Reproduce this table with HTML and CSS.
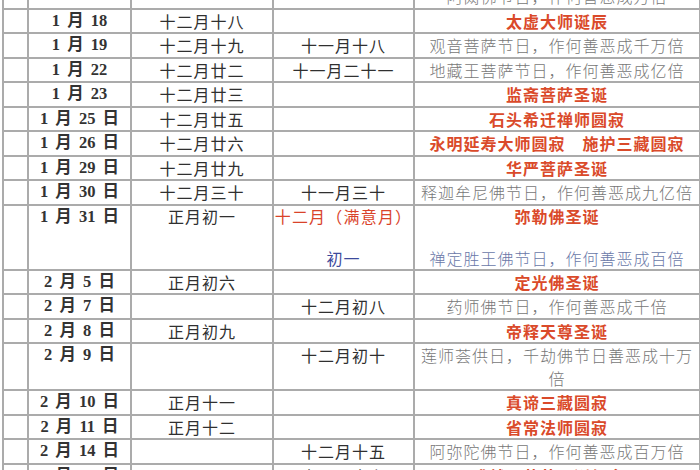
FILE: index.html
```html
<!DOCTYPE html>
<html lang="zh-CN">
<head>
<meta charset="utf-8">
<title>佛教节日表</title>
<link rel="stylesheet" href="styles.css">
</head>
<body>
<table class="cal">
<colgroup><col class="c1"><col class="c2"><col class="c3"><col class="c4"><col class="c5"></colgroup>
<tr><td></td><td></td><td></td><td></td><td class="g">阿閦佛节日，作何善恶成万倍</td></tr>
<tr><td></td><td class="d">1 月 18</td><td class="l">十二月十八</td><td></td><td class="r">太虚大师诞辰</td></tr>
<tr><td></td><td class="d">1 月 19</td><td class="l">十二月十九</td><td class="l">十一月十八</td><td class="g">观音菩萨节日，作何善恶成千万倍</td></tr>
<tr><td></td><td class="d">1 月 22</td><td class="l">十二月廿二</td><td class="l">十一月二十一</td><td class="g">地藏王菩萨节日，作何善恶成亿倍</td></tr>
<tr><td></td><td class="d">1 月 23</td><td class="l">十二月廿三</td><td></td><td class="r">监斋菩萨圣诞</td></tr>
<tr><td></td><td class="d">1 月 25 日</td><td class="l">十二月廿五</td><td></td><td class="r">石头希迁禅师圆寂</td></tr>
<tr><td></td><td class="d">1 月 26 日</td><td class="l">十二月廿六</td><td></td><td class="r">永明延寿大师圆寂　施护三藏圆寂</td></tr>
<tr><td></td><td class="d">1 月 29 日</td><td class="l">十二月廿九</td><td></td><td class="r">华严菩萨圣诞</td></tr>
<tr><td></td><td class="d">1 月 30 日</td><td class="l">十二月三十</td><td class="l">十一月三十</td><td class="g">释迦牟尼佛节日，作何善恶成九亿倍</td></tr>
<tr class="tall3"><td></td><td class="d">1 月 31 日</td><td class="l">正月初一</td><td class="l"><span class="rr">十二月（满意月）</span><br><br><span class="b">初一</span></td><td><span class="r">弥勒佛圣诞</span><br><br><span class="gb">禅定胜王佛节日，作何善恶成百倍</span></td></tr>
<tr><td></td><td class="d">2 月 5 日</td><td class="l">正月初六</td><td></td><td class="r">定光佛圣诞</td></tr>
<tr><td></td><td class="d">2 月 7 日</td><td></td><td class="l">十二月初八</td><td class="g">药师佛节日，作何善恶成千倍</td></tr>
<tr><td></td><td class="d">2 月 8 日</td><td class="l">正月初九</td><td></td><td class="r">帝释天尊圣诞</td></tr>
<tr class="tall2"><td></td><td class="d">2 月 9 日</td><td></td><td class="l">十二月初十</td><td class="g">莲师荟供日，千劫佛节日善恶成十万<br>倍</td></tr>
<tr><td></td><td class="d">2 月 10 日</td><td class="l">正月十一</td><td></td><td class="r">真谛三藏圆寂</td></tr>
<tr><td></td><td class="d">2 月 11 日</td><td class="l">正月十二</td><td></td><td class="r">省常法师圆寂</td></tr>
<tr><td></td><td class="d">2 月 14 日</td><td></td><td class="l">十二月十五</td><td class="g">阿弥陀佛节日，作何善恶成百万倍</td></tr>
<tr><td></td><td class="d">2 月 15 日</td><td></td><td class="l">十二月十六</td><td class="r">成就王菩萨圣诞纪念日</td></tr>
</table>
</body>
</html>
```

FILE: styles.css
```css
html, body {
  margin: 0;
  padding: 0;
  background: #ffffff;
  overflow: hidden;
}

.cal {
  border-collapse: collapse;
  table-layout: fixed;
  width: 697px;
  margin: -17px 0 0 2px;
  font-family: "Noto Sans CJK SC", sans-serif;
  font-size: 16px;
  color: #333333;
}

.c1 { width: 25px; }
.c2 { width: 103px; }
.c3 { width: 142px; }
.c4 { width: 141px; }
.c5 { width: 286px; }

.cal td {
  border: 2px solid #ababab;
  padding: 0;
  line-height: 22.5px;
  height: 22.5px;
  text-align: center;
  vertical-align: top;
  white-space: nowrap;
  overflow: hidden;
}

.d {
  font-family: "Liberation Serif", "Noto Sans CJK SC", serif;
  font-weight: 700;
  font-size: 16.5px;
  word-spacing: 3px;
  color: #333333;
}

.l {
  letter-spacing: 1px;
  color: #303030;
}

.g {
  color: #777777;
  font-weight: 300;
  letter-spacing: 1px;
}

.r {
  color: #da4a2a;
  font-weight: 700;
  letter-spacing: 1px;
}

.rr {
  color: #d9432a;
  letter-spacing: 1.2px;
}

.b {
  color: #3c4a9c;
}

.gb {
  color: #6a78a8;
  font-weight: 300;
  letter-spacing: 1px;
}

.cal .tall3 td {
  height: 62px;
  line-height: 21px;
}

.cal .tall2 td {
  height: 45px;
  line-height: 22.5px;
}
```
